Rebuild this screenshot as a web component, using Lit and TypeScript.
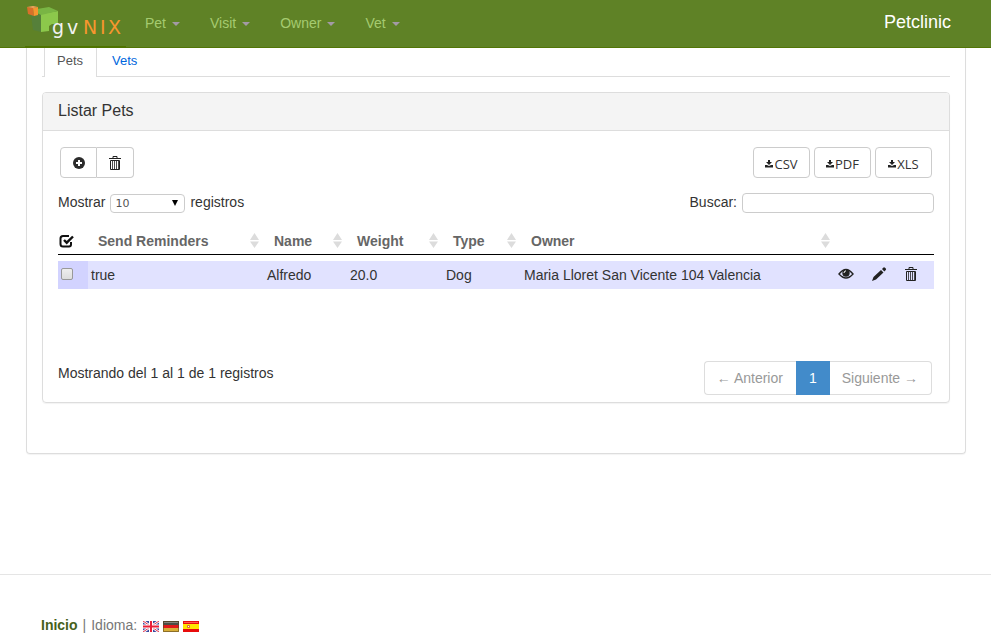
import { LitElement, html, css, svg } from "lit";
import { customElement } from "lit/decorators.js";

const logo = html`<svg width="100" height="40" viewBox="0 0 100 40" role="img" aria-label="gvNIX">
  <path d="M5 12l10-1v18l-8-2z" fill="#56803a" />
  <path d="M15 11l17-3v13h-6l-3 2v5l-8 1z" fill="#8cc84b" />
  <path d="M11 6l12-2 9 4-17 4-4-2z" fill="#79b544" />
  <path d="M1 4l6 1 1 8-6-2z" fill="#d8702a" />
  <path d="M7 5l5-1v8l-4 1z" fill="#f7962f" />
  <path d="M1 4l6-1 5 1-5 1z" fill="#f5a15e" />
  <text class="gv" x="26" y="31">g</text>
  <text class="gv" x="41" y="31">v</text>
  <text class="nix" x="57" y="31">N</text>
  <text class="nix" x="74" y="31">I</text>
  <text class="nix" x="82" y="31">X</text>
</svg>`;

const plus = html`<svg width="14" height="14" viewBox="0 0 14 14" aria-hidden="true">
  <circle cx="7" cy="7" r="6" fill="#2b2b2b" /><path d="M6 4h2v2h2v2H8v2H6V8H4V6h2z" fill="#fff" />
</svg>`;
const trash = html`<svg width="14" height="16" viewBox="0 0 14 16" aria-hidden="true">
  <path d="M5 3V1.500h4V3M1 3.500h12" fill="none" stroke="#222" stroke-width="1" />
  <path d="M2.500 5.500v9h9v-9z" fill="none" stroke="#222" stroke-width="1" />
  <path d="M4.500 6v8M6.500 6v8M8.500 6v8M10.500 6v8" stroke="#222" stroke-opacity=".8" stroke-width="1" />
</svg>`;
const eye = html`<svg width="16" height="14" viewBox="0 0 16 14" aria-hidden="true">
  <path d="M1 7q7-9 14 0-7 8-14 0z" fill="none" stroke="#222" stroke-width="1.400" />
  <circle cx="8" cy="6" r="3.700" fill="#222" /><path d="M6 6q0-2 2-2.200" fill="none" stroke="#fff" />
</svg>`;
const pencil = html`<svg width="16" height="16" viewBox="0 0 16 16" aria-hidden="true">
  <path d="M1 15l1.500-4 7.500-7 2.500 2.500L5 13.500zM11 3l1.500-1.500q.8-.4 1.500.2l.8.800q.6.800 0 1.500L13.300 5.500z" fill="#222" />
</svg>`;
const check = html`<svg width="16" height="14" viewBox="0 0 16 14" aria-hidden="true">
  <path d="M13 8v2.500q0 2-2 2H5q-2.500 0-2.500-2.500V4.500Q2.500 2 5 2h6" fill="none" stroke="#111" stroke-width="2" />
  <path d="M6 6l2.700 2.700L15 2.500" fill="none" stroke="#111" stroke-width="2.400" />
</svg>`;
const download = html`<svg width="8" height="9" viewBox="0 0 8 9" aria-hidden="true">
  <path d="M3 1h2v2h2L4 6 1 3h2zM0 6h2l2 1 2-1h2v2.500H0z" fill="#222" />
</svg>`;
const sorter = html`<svg class="sorter" width="9" height="15" viewBox="0 0 9 15" aria-hidden="true">
  <path d="M4.500 0L9 7H0zM0 8.500h9L4.500 15z" fill="#dcdcdc" />
</svg>`;

const flag = (name: string, art: unknown) => html`<a href="#" aria-label=${name}>
  <svg width="16" height="11" viewBox="0 0 16 11">${art}</svg></a>`;
const british = svg`<path d="M0 0h16v11H0z" fill="#3a4aa0"/>
  <path d="M0 0l16 11M16 0L0 11" stroke="#fff" stroke-width="2.600"/>
  <path d="M0 0l16 11M16 0L0 11" stroke="#e0304a" stroke-width="1"/>
  <path d="M8 0v11M0 5.500h16" stroke="#fff" stroke-width="4"/>
  <path d="M8 0v11M0 5.500h16" stroke="#e8203a" stroke-width="2"/>`;
const german = svg`<path d="M0 0h16v4H0z" fill="#4c4c44"/><path d="M0 4h16v3H0z" fill="#e01818"/>
  <path d="M0 7h16v4H0z" fill="#d8ae38"/><path d="M.5.5h15v10H.5z" fill="none" stroke="#5b4520" stroke-opacity=".6"/>
  <path d="M1 1.500h14" stroke="#85857c"/>`;
const spanish = svg`<path d="M0 0h16v11H0z" fill="#e80c0c"/><path d="M0 3h16v5H0z" fill="#ffe600"/>
  <path d="M1 1.500h14" stroke="#ff5a50"/><path d="M4 4h3v3H4z" fill="#e07838"/><path d="M5 5h1v1H5z" fill="#fff"/>`;

@customElement("app-root")
export class AppRoot extends LitElement {
  static styles = css`
    :host {
      display: block;
      font: 14px/20px "Liberation Sans", Arial, sans-serif;
      color: #333;
    }
    * { box-sizing: border-box; }
    a { text-decoration: none; }
    svg { display: block; flex: none; }
    button, select, input { font: inherit; color: inherit; margin: 0; }
    .navbar {
      display: flex;
      height: 48px;
      padding: 0 40px 0 25px;
      background: #5f8226;
      border-bottom: 1px solid #527506;
    }
    .brand { width: 101px; height: 48px; padding: 3px 0 0 1px; border-bottom: 2px solid #4f7400; }
    .gv, .nix { font: 19px "DejaVu Sans", sans-serif; fill: #f2f2f2; }
    .nix { fill: #f7962f; }
    .menus { display: flex; flex: 1; gap: 30px; padding: 13px 0 0 19px; }
    .menu {
      display: flex;
      align-items: center;
      gap: 6px;
      height: 20px;
      padding: 0;
      border: 0;
      background: none;
      color: #a5cb70;
    }
    .caret { border: 4px solid transparent; border-top-color: #a39aa5; border-bottom: 0; margin-top: 2px; }
    .title { padding-top: 12px; font-size: 18px; color: #fff; }
    .page { padding: 0 25px 0 26px; }
    .box {
      padding: 0 15px 50px;
      border: 1px solid #ddd;
      border-top: 0;
      border-radius: 0 0 4px 4px;
      box-shadow: 0 1px 1px rgba(0, 0, 0, 0.05);
    }
    .tabs { display: flex; height: 29px; padding-left: 2px; border-bottom: 1px solid #ddd; font-size: 13px; }
    .tab { height: 28px; padding: 3px 15px; color: #06d; }
    .tab.active { height: 29px; width: 53px; padding: 3px 12px; border: 1px solid #ddd; border-width: 0 1px; background: #fff; color: #555; }
    .panel {
      margin-top: 15px;
      border: 1px solid #ddd;
      border-radius: 4px;
      box-shadow: 0 1px 1px rgba(0, 0, 0, 0.05);
    }
    .heading {
      margin: 0;
      padding: 8px 15px 9px;
      border-bottom: 1px solid #ddd;
      border-radius: 3px 3px 0 0;
      background: #f4f4f4;
      font-size: 16px;
      font-weight: 400;
    }
    .content { padding: 16px 15px 7px; }
    .bar { display: flex; justify-content: space-between; }
    .tools { padding: 0 2px; }
    .group { display: flex; }
    .exports { gap: 4px; }
    .btn {
      display: flex;
      align-items: center;
      justify-content: center;
      height: 31px;
      width: 37px;
      padding: 0;
      border: 1px solid #ccc;
      border-radius: 4px;
      background: #fff;
    }
    .group .first { border-radius: 4px 0 0 4px; }
    .group .last { border-left: 0; border-radius: 0 4px 4px 0; }
    .export { gap: 1px; width: 57px; padding: 2px 0 0; font: 13px/20px "Open Sans", "Noto Sans", sans-serif; }
    .filters { margin-top: 14px; height: 21px; }
    .field { display: flex; gap: 5px; }
    .pick { position: relative; margin-top: 2px; }
    .select {
      display: block;
      width: 75px;
      height: 19px;
      padding: 1px 4px 0;
      border: 1px solid #ccc;
      border-radius: 4px;
      background: #fff;
      color: #555;
      font: 11px/16px "DejaVu Sans", sans-serif;
      appearance: none;
    }
    .arrow {
      position: absolute;
      right: 7px;
      top: 6px;
      border: 3px solid transparent;
      border-top: 6px solid #000;
      border-bottom: 0;
      pointer-events: none;
    }
    .search { width: 192px; height: 20px; margin-top: 1px; padding: 0 4px; border: 1px solid #ccc; border-radius: 4px; }
    .grid { width: 100%; margin-top: 14px; table-layout: fixed; border-collapse: separate; border-spacing: 0; }
    th { height: 28px; padding: 0; border-bottom: 1px solid #000; text-align: left; color: #666; }
    .sortable { display: flex; justify-content: space-between; align-items: center; padding: 0 5px 0 10px; }
    td { height: 34px; padding: 0 3px; border-top: 6px solid #fff; background: #e1e2ff; white-space: nowrap; }
    .mark { background: #d2d3ff; }
    .c-mark { width: 30px; }
    .c-send { width: 176px; }
    .c-name { width: 83px; }
    .c-weight { width: 96px; }
    .c-type { width: 78px; }
    .c-act { width: 33px; }
    .tick {
      display: block;
      width: 12px;
      height: 12px;
      margin-bottom: 2px;
      border: 1px solid #999;
      border-radius: 2px;
      background: linear-gradient(#eee, #ddd);
      appearance: none;
    }
    .tick:checked { background: #555; }
    .act { display: flex; align-items: center; height: 20px; padding: 0 0 3px; border: 0; background: none; }
    .foot { margin-top: 72px; }
    .info { padding-top: 2px; }
    .pager { display: flex; padding-right: 2px; }
    .pager a { height: 34px; padding: 6px 12px; border: 1px solid #ddd; color: #999; }
    .pager .prev { padding-right: 13px; border-right: 0; border-radius: 4px 0 0 4px; }
    .pager .current { border-color: #428bca; background: #428bca; color: #fff; }
    .pager .next { padding-right: 13px; border-left: 0; border-radius: 0 4px 4px 0; }
    .footer {
      display: flex;
      align-items: center;
      gap: 5px;
      margin-top: 120px;
      padding: 40px 41px 4px;
      border-top: 1px solid #e5e5e5;
      color: #777;
    }
    .home { font-weight: 700; color: #46611a; }
    .flags { display: flex; gap: 4px; padding: 3px 0 0 1px; }
  `;

  private menu(name: string) {
    return html`<button class="menu">${name}<span class="caret"></span></button>`;
  }

  private column(name: string) {
    return html`<th scope="col"><span class="sortable">${name}${sorter}</span></th>`;
  }

  private exporter(name: string) {
    return html`<button class="btn export">${download}${name}</button>`;
  }

  private action(name: string, icon: unknown) {
    return html`<td><button class="act" aria-label=${name}>${icon}</button></td>`;
  }

  render() {
    return html`
      <nav class="navbar">
        <a class="brand" href="#">${logo}</a>
        <div class="menus">${["Pet", "Visit", "Owner", "Vet"].map((m) => this.menu(m))}</div>
        <a class="title" href="#">Petclinic</a>
      </nav>
      <main class="page">
        <div class="box">
          <div class="tabs"><a class="tab active" href="#">Pets</a><a class="tab" href="#">Vets</a></div>
          <section class="panel">
            <h1 class="heading">Listar Pets</h1>
            <div class="content">
              <div class="bar tools">
                <div class="group">
                  <button class="btn first" aria-label="Crear">${plus}</button>
                  <button class="btn last" aria-label="Eliminar">${trash}</button>
                </div>
                <div class="group exports">${["CSV", "PDF", "XLS"].map((e) => this.exporter(e))}</div>
              </div>
              <div class="bar filters">
                <label class="field">Mostrar
                  <span class="pick"><select class="select"><option>10</option><option>25</option></select><span class="arrow"></span></span>
                  registros</label>
                <label class="field">Buscar: <input class="search" type="search" /></label>
              </div>
              <table class="grid">
                <colgroup>
                  <col class="c-mark" /><col class="c-send" /><col class="c-name" /><col class="c-weight" />
                  <col class="c-type" /><col /><col class="c-act" /><col class="c-act" /><col class="c-act" />
                </colgroup>
                <thead>
                  <tr>
                    <th>${check}</th>
                    ${["Send Reminders", "Name", "Weight", "Type", "Owner"].map((c) => this.column(c))}
                    <th colspan="3"></th>
                  </tr>
                </thead>
                <tbody>
                  <tr>
                    <td class="mark"><input class="tick" type="checkbox" aria-label="Alfredo" /></td>
                    <td>true</td><td>Alfredo</td><td>20.0</td><td>Dog</td>
                    <td>Maria Lloret San Vicente 104 Valencia</td>
                    ${this.action("Ver", eye)}${this.action("Editar", pencil)}${this.action("Eliminar", trash)}
                  </tr>
                </tbody>
              </table>
              <div class="bar foot">
                <div class="info">Mostrando del 1 al 1 de 1 registros</div>
                <div class="pager">
                  <a class="prev" href="#">← Anterior</a><a class="current" href="#">1</a><a class="next" href="#">Siguiente →</a>
                </div>
              </div>
            </div>
          </section>
        </div>
      </main>
      <footer class="footer">
        <a class="home" href="#">Inicio</a><span>|</span><span>Idioma:</span>
        <span class="flags">${flag("English", british)}${flag("Deutsch", german)}${flag("Español", spanish)}</span>
      </footer>
    `;
  }
}
